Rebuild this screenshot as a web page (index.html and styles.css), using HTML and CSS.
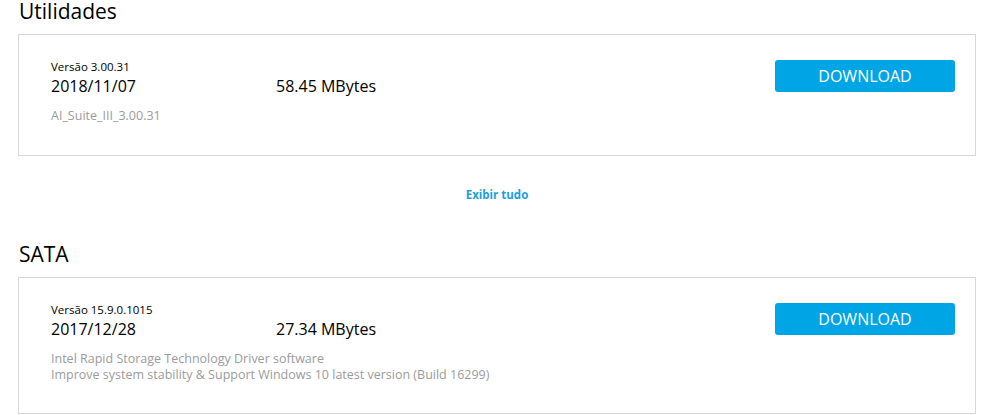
FILE: index.html
```html
<!DOCTYPE html>
<html lang="pt">
<head>
    <meta charset="UTF-8">
    <meta name="viewport" content="width=device-width, initial-scale=1.0">
    <link rel="stylesheet" href="styles.css">
    <title>Drivers e Utilidades</title>
</head>
<body>
    <div class="section">
        <h2 class="section-title">Utilidades</h2>
        <div class="card">
            <div class="info">
                <div class="version">Versão 3.00.31</div>
                <div class="meta">
                    <span class="date">2018/11/07</span>
                    <span class="size">58.45 MBytes</span>
                </div>
                <div class="desc">AI_Suite_III_3.00.31</div>
            </div>
            <a class="btn-download" href="#">DOWNLOAD</a>
        </div>
        <div class="show-all"><a href="#">Exibir tudo</a></div>
    </div>

    <div class="section">
        <h2 class="section-title">SATA</h2>
        <div class="card">
            <div class="info">
                <div class="version">Versão 15.9.0.1015</div>
                <div class="meta">
                    <span class="date">2017/12/28</span>
                    <span class="size">27.34 MBytes</span>
                </div>
                <div class="desc">Intel Rapid Storage Technology Driver software<br>Improve system stability &amp; Support Windows 10 latest version (Build 16299)</div>
            </div>
            <a class="btn-download" href="#">DOWNLOAD</a>
        </div>
    </div>
</body>
</html>
```

FILE: styles.css
```css
*{
    box-sizing: border-box;
}
body{
    margin: 0;
    padding: 0 8px 0 18px;
    font-family: "Open Sans", "Noto Sans", sans-serif;
    color: #000;
    background: #fff;
}
.section-title{
    margin: 0;
    font-size: 21px;
    font-weight: normal;
    line-height: 22px;
    padding-left: 1px;
}
.card{
    display: flex;
    align-items: flex-start;
    margin-top: 12px;
    border: 1px solid #d7d7d7;
    padding: 24px 20px 30px 32px;
    min-height: 122px;
}
.info{
    flex: 1;
}
.version{
    font-size: 11.5px;
    line-height: 16px;
}
.meta{
    display: flex;
    font-size: 16px;
    line-height: 20px;
    margin-top: 1px;
}
.date{
    width: 225px;
}
.desc{
    margin-top: 12px;
    font-size: 12.5px;
    line-height: 16px;
    color: #9b9b9b;
}
.btn-download{
    display: block;
    width: 180px;
    height: 32px;
    margin-top: 1px;
    border-radius: 3px;
    background: #00a5e6;
    color: #fff;
    font-size: 16px;
    line-height: 32px;
    text-align: center;
    text-decoration: none;
}
.show-all{
    text-align: center;
    padding: 31px 0 40px;
    font-size: 11.5px;
    line-height: 16px;
}
.show-all a{
    color: #1a9fe0;
    font-weight: bold;
    text-decoration: none;
}
```
